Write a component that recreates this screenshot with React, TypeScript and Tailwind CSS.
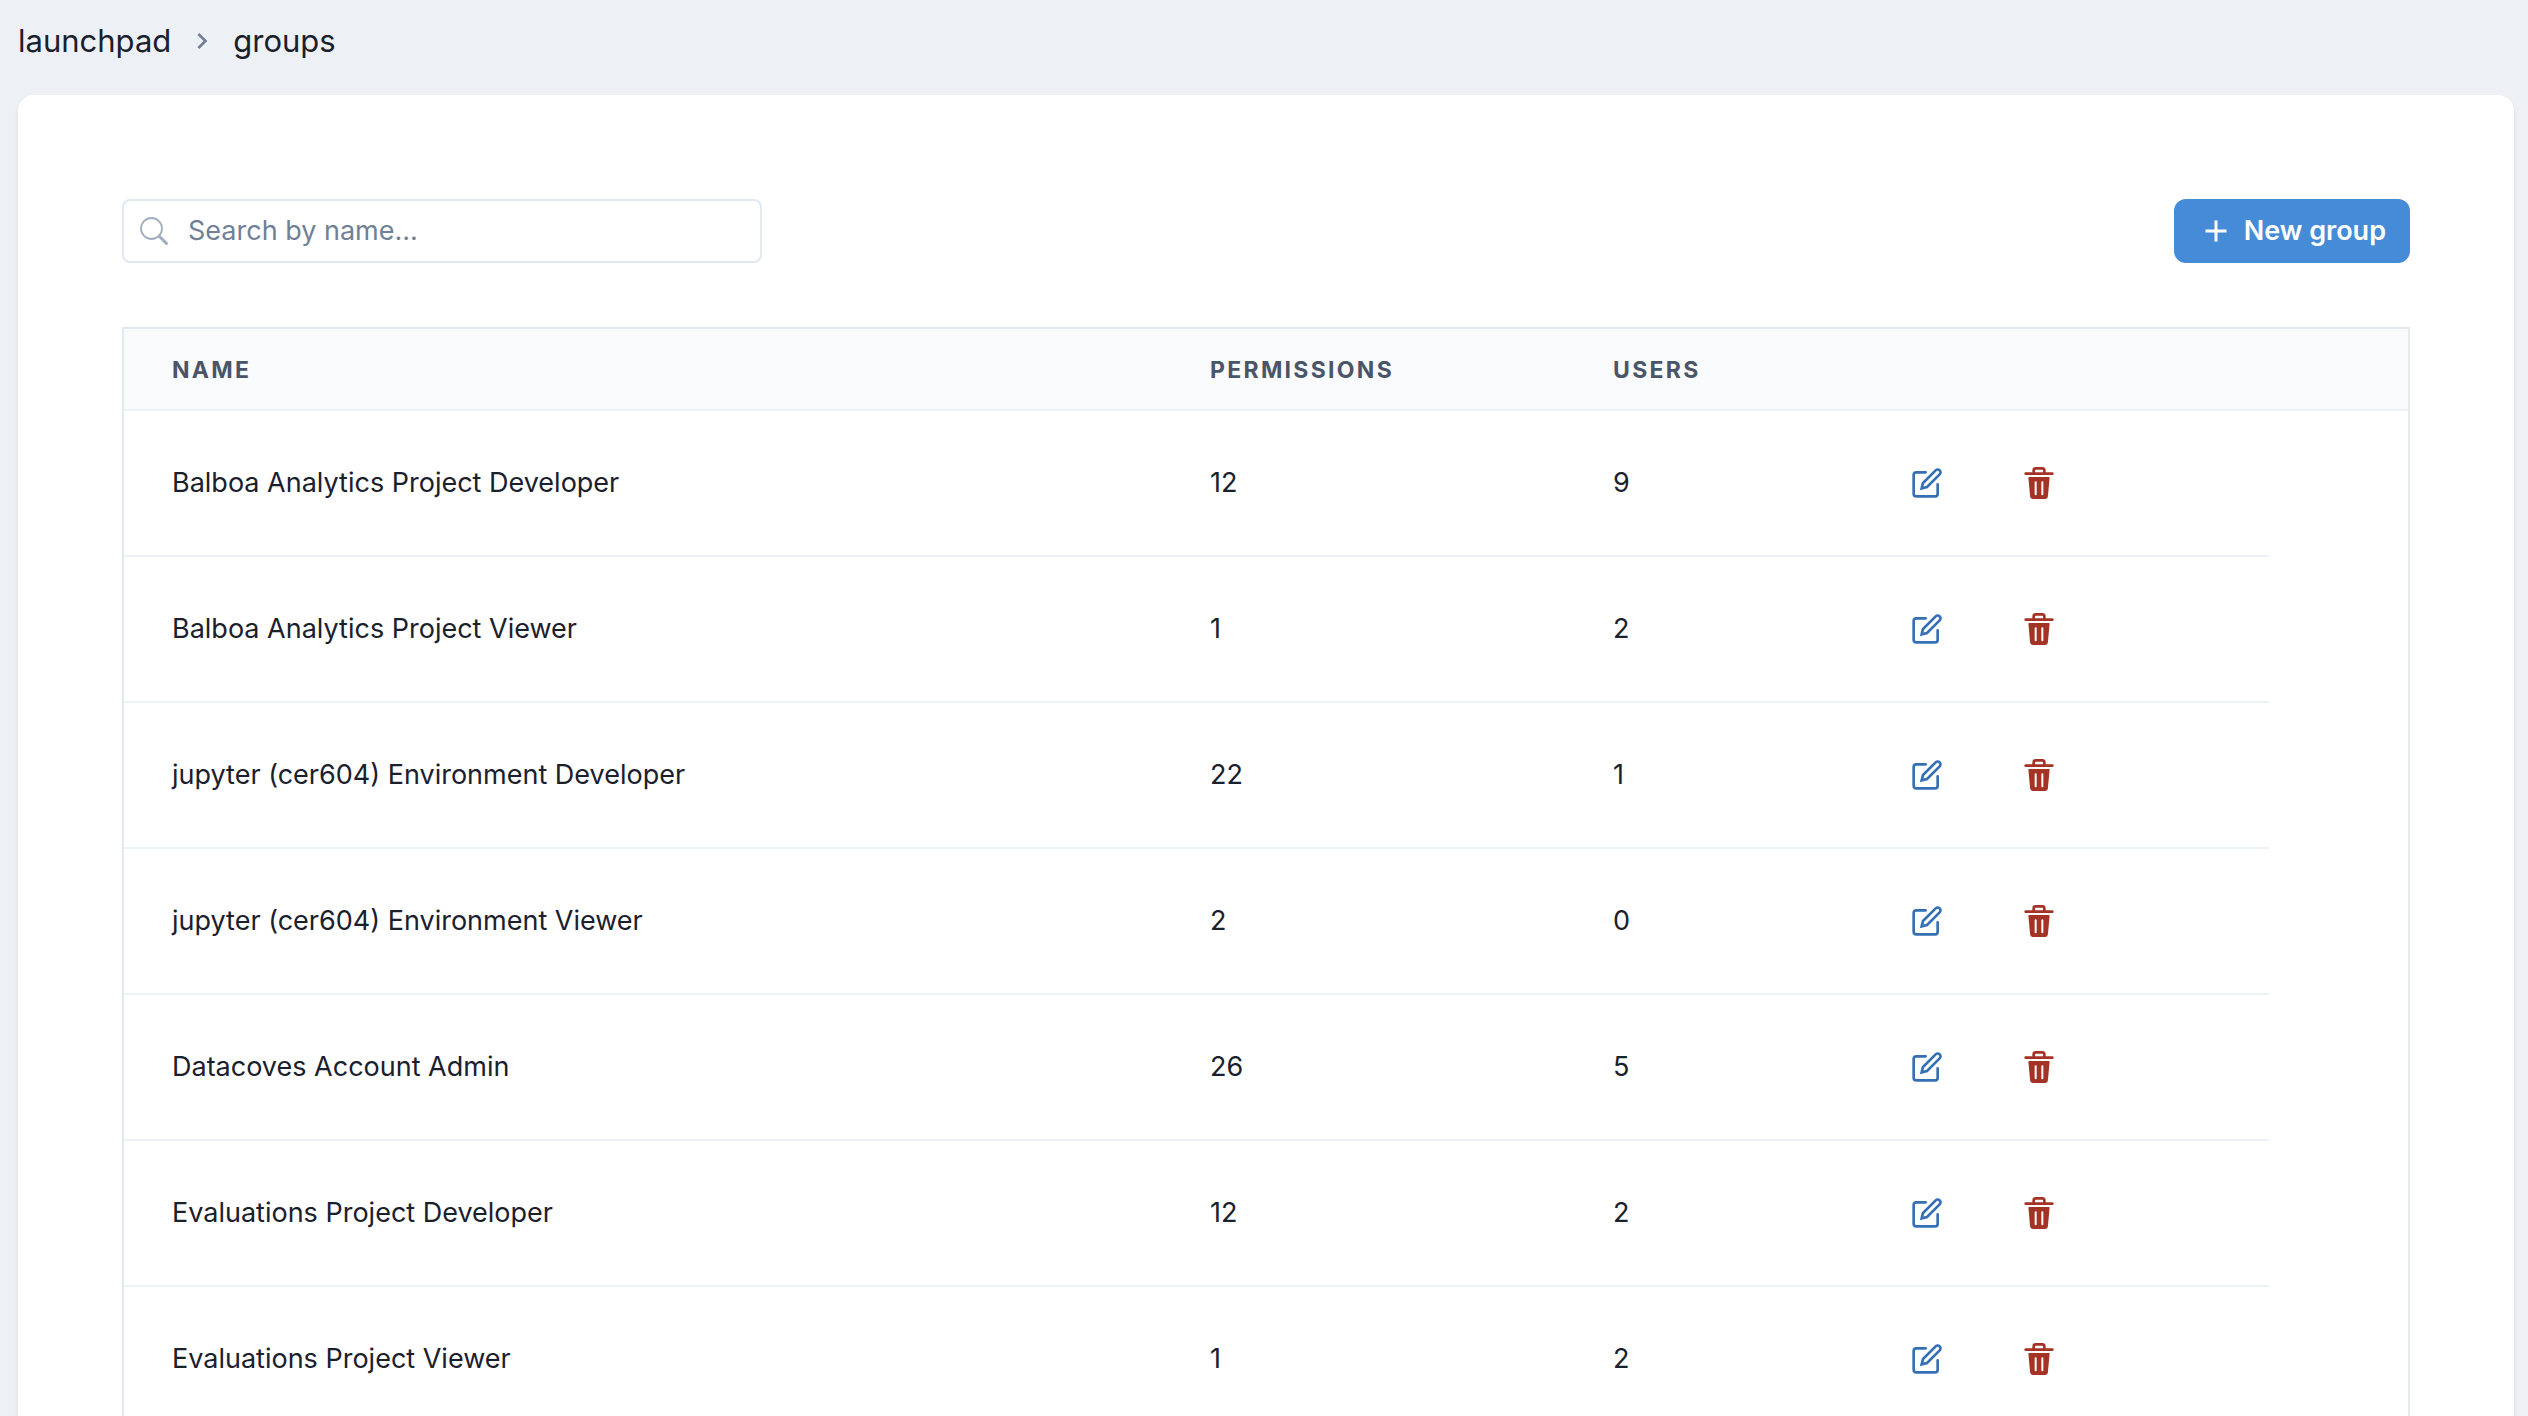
const groups = [
  { name: 'Balboa Analytics Project Developer', permissions: 12, users: 9 },
  { name: 'Balboa Analytics Project Viewer', permissions: 1, users: 2 },
  { name: 'jupyter (cer604) Environment Developer', permissions: 22, users: 1 },
  { name: 'jupyter (cer604) Environment Viewer', permissions: 2, users: 0 },
  { name: 'Datacoves Account Admin', permissions: 26, users: 5 },
  { name: 'Evaluations Project Developer', permissions: 12, users: 2 },
  { name: 'Evaluations Project Viewer', permissions: 1, users: 2 },
];

function EditIcon() {
  return (
    <svg viewBox="0 0 24 24" className="size-8" fill="none" stroke="currentColor" strokeLinecap="round" strokeWidth="2" aria-hidden="true">
      <path d="M11 4H4a2 2 0 0 0-2 2v14a2 2 0 0 0 2 2h14a2 2 0 0 0 2-2v-7" />
      <path d="M18.5 2.5a2.121 2.121 0 0 1 3 3L12 15l-4 1 1-4 9.5-9.5z" />
    </svg>
  );
}

function TrashIcon() {
  return (
    <svg viewBox="0 0 24 24" className="size-8" fill="currentColor" aria-hidden="true">
      <path d="M19.452 7.5H4.547a.5.5 0 00-.5.545l1.287 14.136A2 2 0 007.326 24h9.347a2 2 0 001.992-1.819L19.95 8.045a.5.5 0 00-.129-.382.5.5 0 00-.369-.163zm-9.2 13a.75.75 0 01-1.5 0v-9a.75.75 0 011.5 0zm5 0a.75.75 0 01-1.5 0v-9a.75.75 0 011.5 0z" />
      <path d="M22 4h-4.75a.25.25 0 01-.25-.25V2.5A2.5 2.5 0 0014.5 0h-5A2.5 2.5 0 007 2.5v1.25a.25.25 0 01-.25.25H2a1 1 0 000 2h20a1 1 0 000-2zM9 3.75V2.5a.5.5 0 01.5-.5h5a.5.5 0 01.5.5v1.25a.25.25 0 01-.25.25h-5.5A.25.25 0 019 3.75z" />
    </svg>
  );
}

function SearchIcon() {
  return (
    <svg viewBox="0 0 28 28" className="size-7" fill="none" stroke="currentColor" aria-hidden="true">
      <circle cx="11.5" cy="11.5" r="10.5" strokeWidth="1.8" />
      <path d="M19.2 19.2L26.4 26.4" strokeWidth="3" strokeLinecap="round" />
    </svg>
  );
}

export default function App() {
  return (
    <div className="flex h-screen flex-col overflow-hidden bg-[#edf0f5] pt-[21px] pr-3.5 pl-[18px] font-['Inter',sans-serif] text-[27px] leading-10 text-[#1a202c]">
      <nav aria-label="Breadcrumb">
        <ol className="flex items-center text-[31px]">
          <li><a href="#launchpad">launchpad</a></li>
          <li aria-hidden="true" className="mx-[15px] text-[#718096]">
            <svg viewBox="0 0 24 24" className="size-8" fill="currentColor">
              <path d="M10 6L8.59 7.41 13.17 12l-4.58 4.59L10 18l6-6z" />
            </svg>
          </li>
          <li><a href="#groups" aria-current="page">groups</a></li>
        </ol>
      </nav>

      <main className="mt-[34px] grow rounded-t-2xl bg-white px-[104px] pt-[104px] shadow-md">
        <div className="flex h-16 items-center justify-between">
          <label className="flex h-16 w-[640px] items-center gap-5 rounded-lg border-2 border-[#e2e8f0] px-4 text-[#a0aec0]">
            <SearchIcon />
            <input type="search" aria-label="Search by name" placeholder="Search by name..." className="min-w-0 grow text-[#1a202c] outline-none placeholder:text-[#718096]" />
          </label>
          <button type="button" className="flex h-16 items-center gap-4 rounded-xl bg-[#468bd7] pr-6 pl-[30px] font-semibold text-white">
            <svg viewBox="0 0 24 24" className="size-6" stroke="currentColor" strokeWidth="3" aria-hidden="true">
              <path d="M12 1.5v21M1.5 12h21" />
            </svg>
            New group
          </button>
        </div>

        <div className="mt-16 border-2 border-b-0 border-[#e2e8f0]">
          <table className="w-full table-fixed border-separate border-spacing-0 text-left">
            <colgroup>
              <col />
              <col className="w-[403px]" />
              <col className="w-[298px]" />
              <col className="w-[406px]" />
              <col className="w-[139px]" />
            </colgroup>
            <thead>
              <tr className="h-[82px] bg-[#f9fafc] text-[23px] tracking-widest text-[#4a5568] uppercase">
                <th scope="col" className="border-b-2 border-[#edf2f7] px-12 pt-0.5">Name</th>
                <th scope="col" className="border-b-2 border-[#edf2f7] px-12 pt-0.5">Permissions</th>
                <th scope="col" className="border-b-2 border-[#edf2f7] px-12 pt-0.5">Users</th>
                <td className="border-b-2 border-[#edf2f7]" />
                <td className="border-b-2 border-[#edf2f7]" />
              </tr>
            </thead>
            <tbody>
              {groups.map((group) => (
                <tr key={group.name} className="h-[146px]">
                  <td className="border-b-2 border-[#edf2f7] px-12">{group.name}</td>
                  <td className="border-b-2 border-[#edf2f7] px-12">{group.permissions}</td>
                  <td className="border-b-2 border-[#edf2f7] px-12">{group.users}</td>
                  <td className="border-b-2 border-[#edf2f7] px-12">
                    <div className="flex gap-20">
                      <button type="button" aria-label={`Edit ${group.name}`} className="text-[#3570b4]"><EditIcon /></button>
                      <button type="button" aria-label={`Delete ${group.name}`} className="text-[#a43325]"><TrashIcon /></button>
                    </div>
                  </td>
                </tr>
              ))}
            </tbody>
          </table>
        </div>
      </main>
    </div>
  );
}
